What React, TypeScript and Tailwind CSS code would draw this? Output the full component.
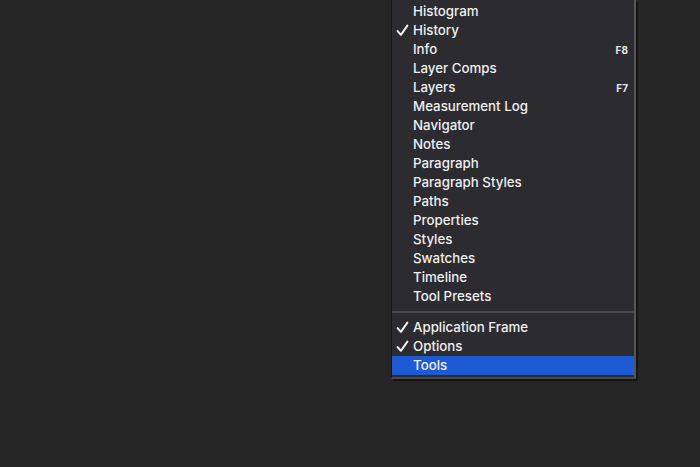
const items: { label: string; checked?: boolean; shortcut?: string }[] = [
  { label: "Histogram" },
  { label: "History", checked: true },
  { label: "Info", shortcut: "F8" },
  { label: "Layer Comps" },
  { label: "Layers", shortcut: "F7" },
  { label: "Measurement Log" },
  { label: "Navigator" },
  { label: "Notes" },
  { label: "Paragraph" },
  { label: "Paragraph Styles" },
  { label: "Paths" },
  { label: "Properties" },
  { label: "Styles" },
  { label: "Swatches" },
  { label: "Timeline" },
  { label: "Tool Presets" },
];

const bottom: { label: string; checked?: boolean; active?: boolean }[] = [
  { label: "Application Frame", checked: true },
  { label: "Options", checked: true },
  { label: "Tools", active: true },
];

function Check() {
  return (
    <svg width="13" height="13" viewBox="0 0 12 12" fill="none">
      <path d="M1.5 6.5 L4.5 10 L10.5 1.5" stroke="#f2f2f2" strokeWidth="1.8" strokeLinecap="round" strokeLinejoin="round" />
    </svg>
  );
}

function Row({ label, checked, shortcut, active }: { label: string; checked?: boolean; shortcut?: string; active?: boolean }) {
  return (
    <div className={`flex items-center h-[19px] pl-[4px] pr-[6px] ${active ? "bg-[#1d5ad3]" : ""}`}>
      <div className="w-[17px] flex items-center">{checked && <Check />}</div>
      <span className="flex-1 text-[13.3px] font-medium text-[#efefef] leading-none">{label}</span>
      {shortcut && <span className="text-[10px] font-bold text-[#e6e6e6] leading-none">{shortcut}</span>}
    </div>
  );
}

export default function App() {
  return (
    <div className="w-[700px] h-[467px] bg-[#262626] pl-[391px] overflow-hidden" style={{ fontFamily: "Inter, 'Liberation Sans', sans-serif" }}>
      <div className="w-[245px] bg-[#2c2b30] border-l border-[#161616] border-r-2 border-r-[#55555a] border-b-2 border-b-[#4a4a4e] pt-[2px] pb-[2px] shadow-[2px_2px_0_#141414]">
        {items.map((it) => (
          <Row key={it.label} {...it} />
        ))}
        <div className="h-[12px] flex items-center">
          <div className="w-full h-[2px] bg-[#47474b]" />
        </div>
        {bottom.map((it) => (
          <Row key={it.label} {...it} />
        ))}
      </div>
    </div>
  );
}
